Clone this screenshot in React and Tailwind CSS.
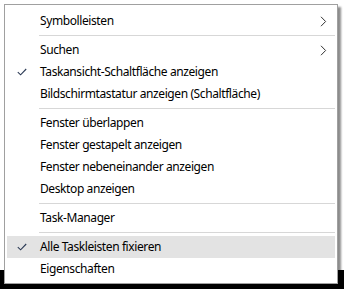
import React from "react";

const Check = () => (
  <svg width="10" height="8" viewBox="0 0 10 8" className="block">
    <polyline points="0.8,4.2 3.6,6.8 9.2,1" fill="none" stroke="#2b3a55" strokeWidth="1.1" />
  </svg>
);

const Chevron = () => (
  <svg width="7" height="11" viewBox="0 0 7 11" className="block">
    <polyline points="1,0.8 5.6,5.5 1,10.2" fill="none" stroke="#333" strokeWidth="1" />
  </svg>
);

const Row = ({ label, checked, sub, active }) => (
  <div className={`flex h-[22px] items-center ${active ? "bg-[#e3e3e3]" : ""}`}>
    <div className="flex w-[33px] shrink-0 justify-start pl-[10px]">{checked ? <Check /> : null}</div>
    <div className="flex-1 whitespace-nowrap">{label}</div>
    {sub ? <div className="pr-[8px]"><Chevron /></div> : null}
  </div>
);

const Sep = () => (
  <div className="h-[7px] pl-[32px] pt-[3px]">
    <div className="h-px bg-[#d7d7d7]" />
  </div>
);

export default function App() {
  return (
    <div className="relative flex h-[289px] w-[344px] flex-col overflow-hidden bg-white">
      <div className="flex-1 bg-white" />
      <div className="h-[19px] bg-black" />
      <div
        className="absolute left-[4px] top-[4px] flex h-[280px] w-[334px] flex-col border border-[#a0a0a0] bg-white px-[2px] pb-[2px] pt-[5px] text-[12px] tracking-[-0.4px] text-black shadow-[3px_3px_2px_rgba(0,0,0,0.45)]"
        style={{ fontFamily: '"Noto Sans", "Open Sans", sans-serif' }}
      >
        <Row label="Symbolleisten" sub />
        <Sep />
        <Row label="Suchen" sub />
        <Row label="Taskansicht-Schaltfläche anzeigen" checked />
        <Row label="Bildschirmtastatur anzeigen (Schaltfläche)" />
        <Sep />
        <Row label="Fenster überlappen" />
        <Row label="Fenster gestapelt anzeigen" />
        <Row label="Fenster nebeneinander anzeigen" />
        <Row label="Desktop anzeigen" />
        <Sep />
        <Row label="Task-Manager" />
        <Sep />
        <Row label="Alle Taskleisten fixieren" checked active />
        <Row label="Eigenschaften" />
      </div>
    </div>
  );
}
